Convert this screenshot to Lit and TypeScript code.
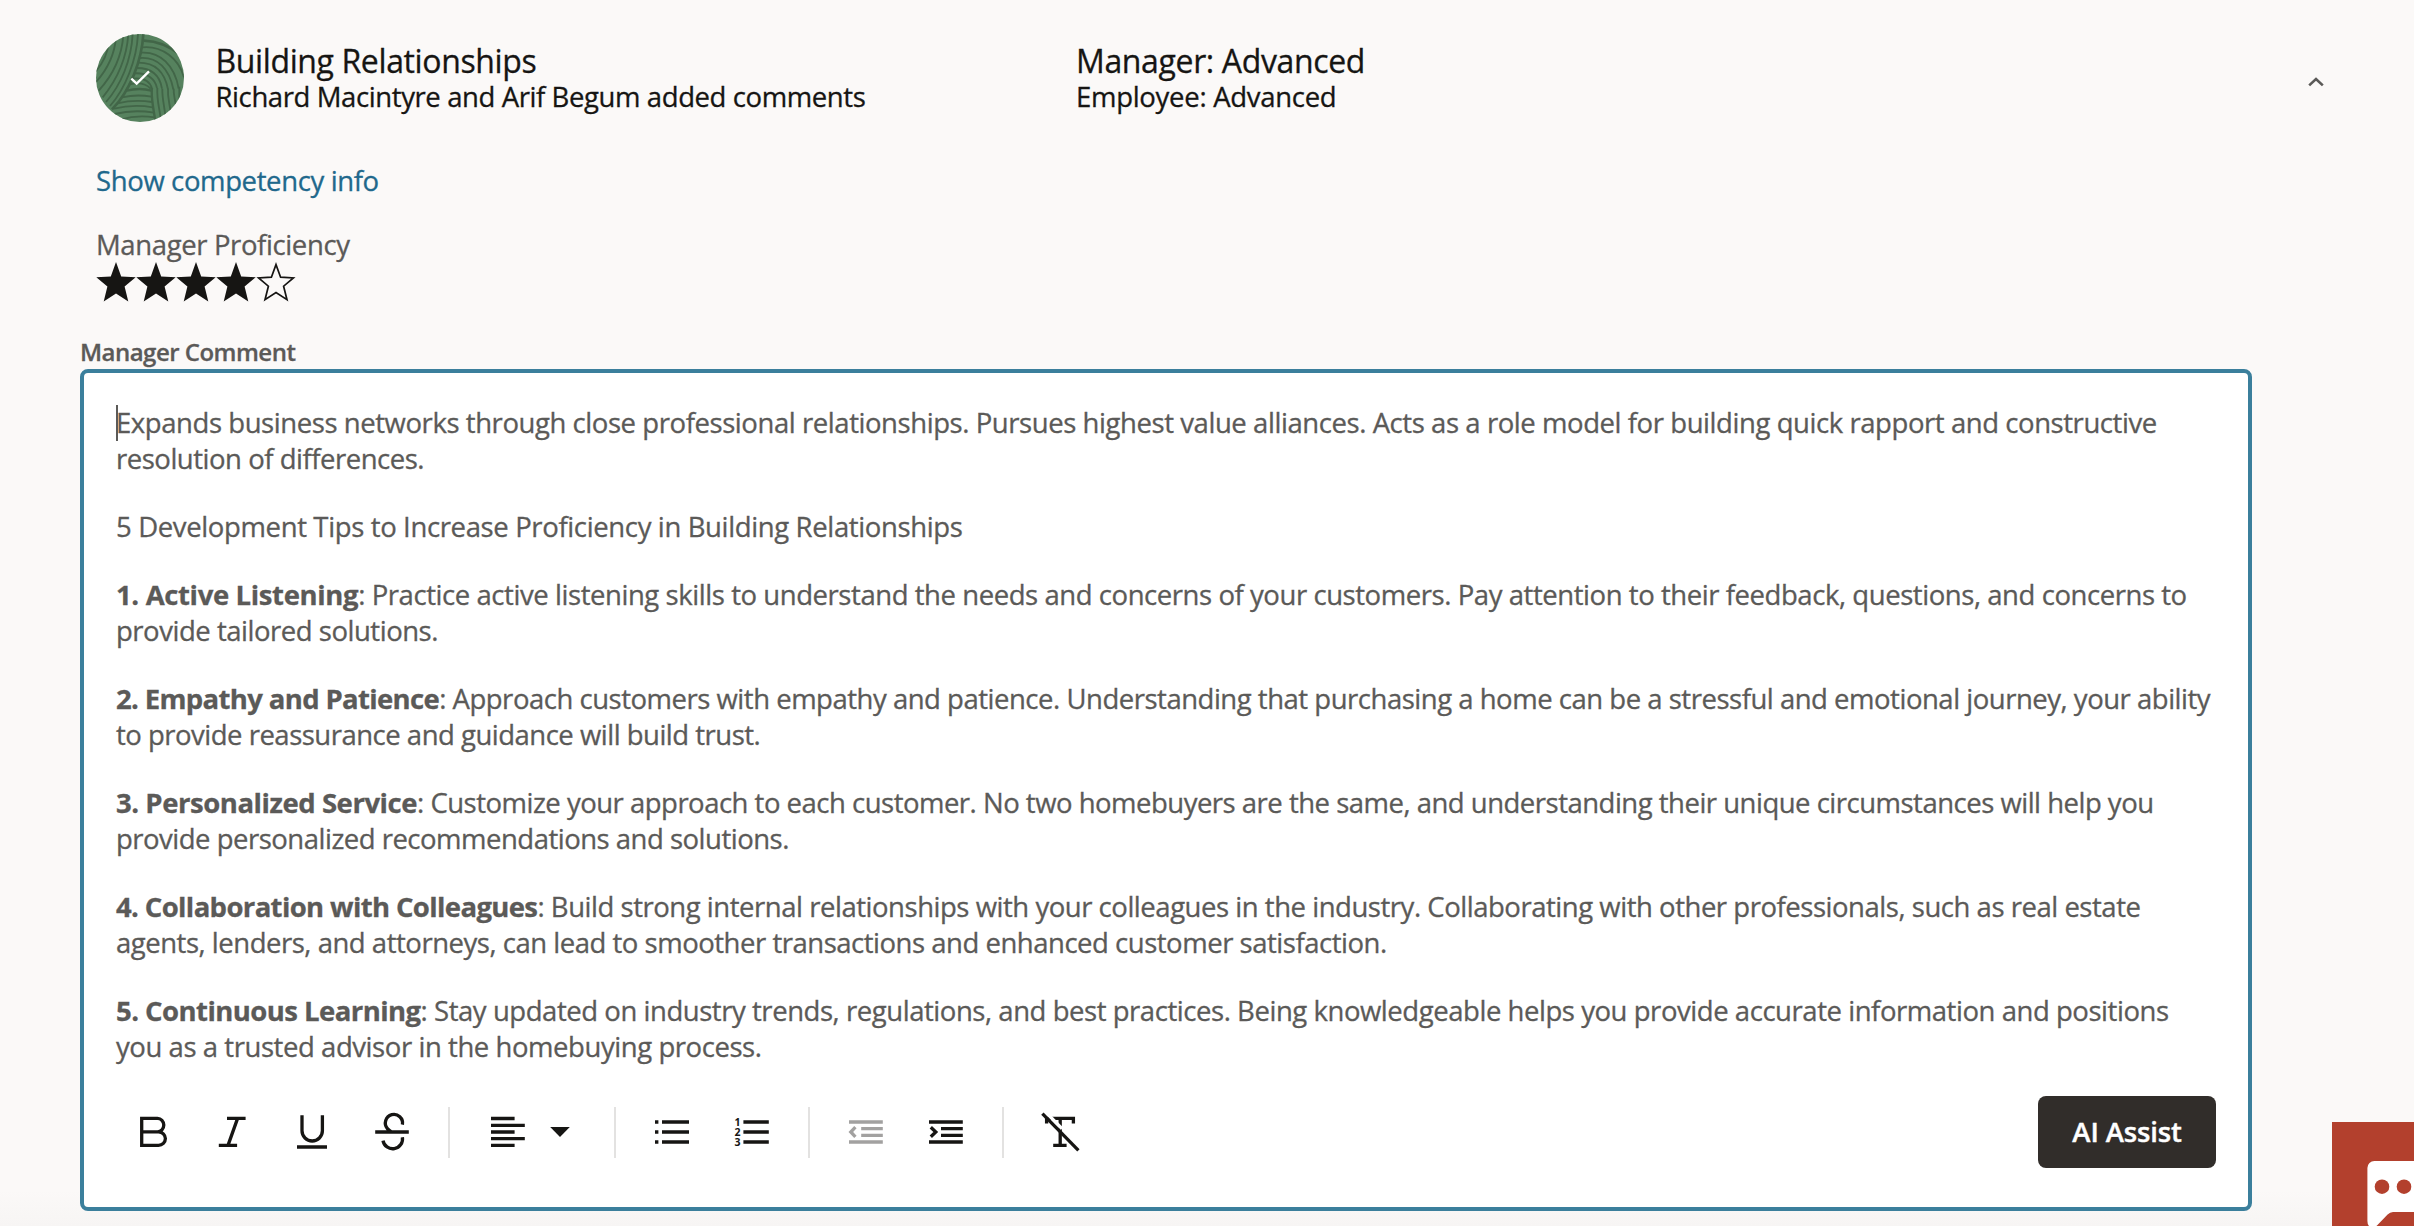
import { LitElement, html, svg, css, nothing } from 'lit';
import { customElement, property } from 'lit/decorators.js';
import { styleMap } from 'lit/directives/style-map.js';
import { classMap } from 'lit/directives/class-map.js';

/** A run of text with its own tracking, in pixels. */
interface Run {
  text: string;
  track: number;
  strong?: boolean;
}
type Line = Run[];

const COMMENT: Line[][] = [
  [
    [{ text: 'Expands business networks through close professional relationships. Pursues highest value alliances. Acts as a role model for building quick rapport and constructive', track: -0.432 }],
    [{ text: 'resolution of differences.', track: -0.48 }],
  ],
  [[{ text: '5 Development Tips to Increase Proficiency in Building Relationships', track: -0.365 }]],
  [
    [
      { text: '1. Active Listening', track: -0.36, strong: true },
      { text: ': Practice active listening skills to understand the needs and concerns of your customers. Pay attention to their feedback, questions, and concerns to', track: -0.438 },
    ],
    [{ text: 'provide tailored solutions.', track: -0.474 }],
  ],
  [
    [
      { text: '2. Empathy and Patience', track: -0.65, strong: true },
      { text: ': Approach customers with empathy and patience. Understanding that purchasing a home can be a stressful and emotional journey, your ability', track: -0.482 },
    ],
    [{ text: 'to provide reassurance and guidance will build trust.', track: -0.5 }],
  ],
  [
    [
      { text: '3. Personalized Service', track: -0.45, strong: true },
      { text: ': Customize your approach to each customer. No two homebuyers are the same, and understanding their unique circumstances will help you', track: -0.502 },
    ],
    [{ text: 'provide personalized recommendations and solutions.', track: -0.5 }],
  ],
  [
    [
      { text: '4. Collaboration with Colleagues', track: -0.63, strong: true },
      { text: ': Build strong internal relationships with your colleagues in the industry. Collaborating with other professionals, such as real estate', track: -0.468 },
    ],
    [{ text: 'agents, lenders, and attorneys, can lead to smoother transactions and enhanced customer satisfaction.', track: -0.479 }],
  ],
  [
    [
      { text: '5. Continuous Learning', track: -0.55, strong: true },
      { text: ': Stay updated on industry trends, regulations, and best practices. Being knowledgeable helps you provide accurate information and positions', track: -0.45 },
    ],
    [{ text: 'you as a trusted advisor in the homebuying process.', track: -0.437 }],
  ],
];

/* Toolbar glyphs, drawn on an 80 x 72 button whose centre is 40,36. */
const GLYPHS = {
  bold: svg`<path d="M29.7 22.3h15.8a6.3 6.8 0 0 1 0 13.6H29.7zM29.7 35.9h16.800a6.900 6.700 0 0 1 0 13.400H29.700z" />`,
  italic: svg`<path d="M35 22.4h18.6M26.8 49.4h18.3M45.600 22.4L36 49.4" />`,
  underline: svg`<path d="M30 19.2v15.6a10.2 10.2 0 0 0 20.4 0V19.2M25 51h30" />`,
  strike: svg`<path d="M23.2 36h33.6M50.4 28.6a8.6 8.6 0 1 0-15 4q1.6 1.9 4 3.4M50.4 41.2a9.6 9.6 0 0 1-19.4 3.4" />`,
  bullets: svg`<path d="M23 26h3.4M23 36h3.4M23 46h3.4M30 26h27M30 36h27M30 46h27" />`,
  numbers: svg`<path d="M31.4 26h25.4M31.4 36h25.4M31.4 46h25.4" />
    <text x="22.6" y="29.8">1</text><text x="22.6" y="39.8">2</text><text x="22.6" y="49.8">3</text>`,
  outdent: svg`<path d="M23 26h33.8M23 46h33.8M35.2 32.6h21.6M35.2 39.4h21.6M29.4 31.2L24.8 36l4.6 4.8" />`,
  indent: svg`<path d="M23 26h33.8M23 46h33.8M35 32.6h21.8M35 39.4h21.8M24.8 31.2L29.8 36l-5 4.8" />`,
  clear: svg`<path d="M26.6 27.6v-5.2h26.8v5.2M40.2 22.4v26M33.2 49.4h13.4" />
    <path class="halo" d="M26 16.5L42 32.800" />
    <path d="M22.4 17.6L58.4 54.4" />`,
};
type Glyph = keyof typeof GLYPHS;

@customElement('tool-button')
class ToolButton extends LitElement {
  @property() glyph: Glyph = 'bold';
  @property({ type: Boolean }) muted = false;

  static styles = css`
    :host { display: block; width: 80px; height: 72px; }
    .icon { display: block; fill: none; stroke: #161513; stroke-width: 3.3; }
    .icon.muted { stroke: #a2a1a0; }
    .halo { stroke: #fff; stroke-width: 3.4; }
    text { font: 700 10.5px 'Open Sans', sans-serif; fill: #161513; stroke: none; }
  `;

  render() {
    return html`<svg class=${classMap({ icon: true, muted: this.muted })} width="80" height="72" viewBox="0 0 80 72">
      ${GLYPHS[this.glyph]}
    </svg>`;
  }
}

@customElement('star-rating')
class StarRating extends LitElement {
  @property({ type: Number }) value = 0;
  @property({ type: Number }) max = 5;

  static styles = css`
    :host { display: flex; }
    .star { display: block; fill: #161513; }
    .star.empty { fill: none; stroke: #161513; stroke-width: 1.7; }
  `;

  render() {
    return Array.from({ length: this.max }, (_, i) =>
      i < this.value
        ? html`<svg class="star" width="40" height="40" viewBox="0 0 40 40"><path d="M20 0L25.2 14.4 39.7 15.2 28.6 24.6 32.3 39.6 20 31.6 7.7 39.6 11.4 24.6.3 15.2 14.8 14.4z" /></svg>`
        : html`<svg class="star empty" width="40" height="40" viewBox="0 0 40 40"><path d="M20 2.6L24.6 15.2 37.4 15.9 27.6 24.2 31 37.7 20 30.6 9 37.7 12.4 24.2 2.6 15.9 15.4 15.2z" /></svg>`,
    );
  }
}

@customElement('app-root')
class AppRoot extends LitElement {
  static styles = css`
    :host {
      display: block;
      position: relative;
      box-sizing: border-box;
      width: 2414px;
      height: 1226px;
      overflow: hidden;
      background: linear-gradient(#fbf9f8 0 1190px, #f7f5f4 1226px);
      font: 400 27.5px/36px 'Open Sans', 'Noto Sans', sans-serif;
      color: #161513;
      white-space: nowrap;
      -webkit-text-stroke: 0.3px currentColor;
    }
    .header { display: flex; align-items: center; padding: 34px 90px 0 96px; height: 88px; }
    .avatar { display: block; flex: none; width: 88px; height: 88px; }
    .names { width: 862px; padding: 2px 0 0 31.5px; box-sizing: border-box; }
    .levels { flex: 1; padding: 2px 0 0 30px; }
    .title { font-size: 32px; line-height: 36px; letter-spacing: -0.38px; }
    .levels .title { letter-spacing: -0.36px; }
    .names .sub { letter-spacing: -0.4px; }
    .levels .sub { letter-spacing: -0.29px; }
    .chevron { display: block; flex: none; width: 16px; height: 10px; margin-top: 7px; }
    .details { display: flex; flex-direction: column; align-items: flex-start; padding: 41px 0 0 96px; }
    .link { color: #21688c; text-decoration: none; letter-spacing: -0.37px; }
    .proficiency { margin-top: 28px; color: #5b5a58; letter-spacing: -0.38px; }
    star-rating { margin-top: -1px; }
    .field { padding: 34px 0 0 80px; }
    .label { font-size: 24px; line-height: 32px; font-weight: 600; color: #5b5a58; letter-spacing: -0.52px; }
    .editor {
      box-sizing: border-box;
      width: 2172px;
      height: 842px;
      margin-top: 1px;
      border: 4px solid #3b7f9c;
      border-radius: 8px;
      background: #fff;
      display: flex;
      flex-direction: column;
    }
    .body { padding: 32px 0 0 32px; color: #5b5a58; display: flex; flex-direction: column; gap: 32px; height: 691px; box-sizing: border-box; position: relative; }
    .caret { position: absolute; left: 32px; top: 32px; width: 2px; height: 36px; background: #5b5a58; }
    .strong { font-weight: 700; }
    .toolbar { display: flex; align-items: center; margin-top: 32px; padding: 0 32px 0 28px; height: 72px; }
    .rule { width: 2px; height: 51px; margin: 0 16px; background: #e3e2e1; }
    .align { display: block; width: 132px; height: 72px; }
    .assist {
      margin-left: auto;
      width: 178px;
      height: 72px;
      border: 0;
      border-radius: 8px;
      background: #312d2a;
      color: #fff;
      font: 600 27.5px/36px 'Open Sans', sans-serif;
      letter-spacing: -0.15px;
      padding: 0;
      -webkit-text-stroke: 0.4px #fff;
    }
    .chat { position: absolute; right: 0; bottom: 0; width: 82px; height: 104px; display: block; background: #b3402d; }
  `;

  private line(line: Line) {
    return html`<div>${line.map(
      (run) =>
        html`<span class=${run.strong ? 'strong' : nothing} style=${styleMap({ letterSpacing: `${run.track}px` })}>${run.text}</span>`,
    )}</div>`;
  }

  private avatar() {
    return html`<svg class="avatar" viewBox="48 42 264 264">
      <defs><clipPath id="disc"><circle cx="180" cy="174" r="132" /></clipPath></defs>
      <g clip-path="url(#disc)">
        <rect x="48" y="42" width="264" height="264" fill="#56825e" />
        <g fill="none" stroke="#426648" stroke-width="5.5">
          <path d="M86 66C84 96 72 126 46 156" />
          <path d="M108 52C104 100 84 146 48 186" />
          <path d="M130 44C126 108 100 164 56 212" />
          <path d="M145 42C140 116 112 178 68 232" />
          <path d="M158 42C154 122 122 196 78 246" />
          <path d="M174 42C170 120 136 206 90 258" />
          <path d="M190 42C186 120 150 214 96 268" stroke-width="8" />
          <path d="M192 62Q250 64 300 104" stroke-width="8" />
          <path d="M187 82C246 76 296 116 312 172" />
          <path d="M184 98C240 94 284 136 296 206" />
          <path d="M180 114C232 110 268 146 280 208" />
          <path d="M176 128C224 128 254 156 264 208" />
          <path d="M170 144C216 144 240 168 246 206" />
          <path d="M164 160C204 158 226 178 231 204" />
          <path d="M156 176C190 172 210 184 216 206" />
          <path d="M146 194Q190 182 212 206" />
          <path d="M140 212Q180 202 214 212" stroke-width="7" />
          <path d="M216 204C212 236 222 270 226 306" stroke-width="7" />
          <path d="M232 204C230 240 238 262 242 296" />
          <path d="M247 206C246 236 254 260 256 290" />
          <path d="M264 206C262 236 270 250 272 280" />
          <path d="M281 206C280 226 286 240 288 262" />
          <path d="M298 200V240" />
          <path d="M126 232Q170 222 214 230" />
          <path d="M112 250Q164 238 216 246" />
          <path d="M102 266Q160 252 218 262" />
          <path d="M104 282Q160 268 222 278" />
          <path d="M124 298Q170 284 224 292" />
        </g>
      </g>
      <path d="M154 176L170 191 207 154" fill="none" stroke="#fff" stroke-width="7" />
    </svg>`;
  }

  render() {
    return html`
      <div class="header">
        ${this.avatar()}
        <div class="names">
          <div class="title">Building Relationships</div>
          <div class="sub">Richard Macintyre and Arif Begum added comments</div>
        </div>
        <div class="levels">
          <div class="title">Manager: Advanced</div>
          <div class="sub">Employee: Advanced</div>
        </div>
        <svg class="chevron" viewBox="0 0 16 10"><path d="M1.2 8.4L8 2l6.8 6.4" fill="none" stroke="#5b5a58" stroke-width="2.6" /></svg>
      </div>

      <div class="details">
        <a class="link">Show competency info</a>
        <div class="proficiency">Manager Proficiency</div>
        <star-rating value="4" max="5"></star-rating>
      </div>

      <div class="field">
        <div class="label">Manager Comment</div>
        <div class="editor">
          <div class="body">
            <span class="caret"></span>
            ${COMMENT.map((lines) => html`<div>${lines.map((l) => this.line(l))}</div>`)}
          </div>
          <div class="toolbar">
            <tool-button glyph="bold"></tool-button>
            <tool-button glyph="italic"></tool-button>
            <tool-button glyph="underline"></tool-button>
            <tool-button glyph="strike"></tool-button>
            <span class="rule"></span>
            <svg class="align" viewBox="0 0 132 72">
              <path d="M25 22.5h23.6M25 29.3h33.8M25 36h23.6M25 42.7h33.8M25 49.4h23.6" stroke="#161513" stroke-width="3.3" />
              <path d="M84.2 31h19.6l-9.8 10z" fill="#161513" />
            </svg>
            <span class="rule"></span>
            <tool-button glyph="bullets"></tool-button>
            <tool-button glyph="numbers"></tool-button>
            <span class="rule"></span>
            <tool-button glyph="outdent" muted></tool-button>
            <tool-button glyph="indent"></tool-button>
            <span class="rule"></span>
            <tool-button glyph="clear"></tool-button>
            <button class="assist">AI Assist</button>
          </div>
        </div>
      </div>

      <svg class="chat" viewBox="0 0 82 104">
        <path d="M82 39H42.4a7 7 0 0 0-7 7v53q0 6 5 6.6q2.4 0 4.6-2.2L55.6 92.6q2.4-2.6 5.4-2.6H82z" fill="#fff" />
        <circle cx="50" cy="64.7" r="7.3" fill="#b3402d" />
        <circle cx="72" cy="64.7" r="7.3" fill="#b3402d" />
      </svg>
    `;
  }
}
